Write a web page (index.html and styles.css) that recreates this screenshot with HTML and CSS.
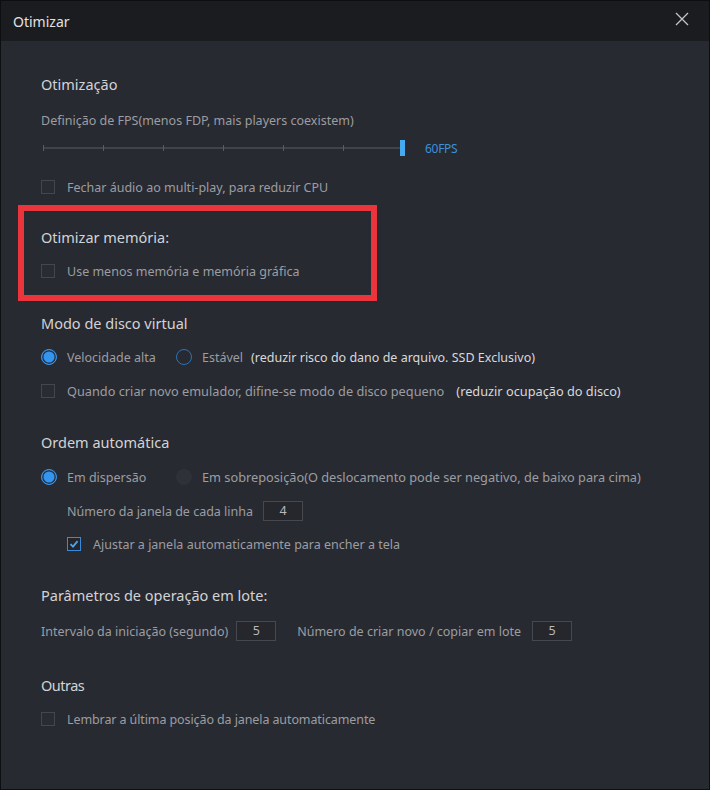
FILE: index.html
```html
<!DOCTYPE html>
<html>
<head>
<meta charset="utf-8">
<link rel="stylesheet" href="styles.css">
</head>
<body>
<div class="win">
  <div class="titlebar">
    <span class="title">Otimizar</span>
    <svg class="close" width="14" height="14" viewBox="0 0 14 14"><path d="M1 1L13 13M13 1L1 13" stroke="#c4c5c8" stroke-width="1.3" fill="none"/></svg>
  </div>
  <div class="content">
    <div class="heading h1">Otimização</div>
    <div class="row desc m16">Definição de FPS(menos FDP, mais players coexistem)</div>
    <div class="slider m10">
      <svg width="368" height="16" viewBox="0 0 368 16">
        <line x1="2" y1="8" x2="361" y2="8" stroke="#5a5c62" stroke-width="1"/>
        <line x1="2.5" y1="5" x2="2.5" y2="11" stroke="#5a5c62"/>
        <line x1="62.5" y1="5" x2="62.5" y2="11" stroke="#5a5c62"/>
        <line x1="122.5" y1="5" x2="122.5" y2="11" stroke="#5a5c62"/>
        <line x1="182.5" y1="5" x2="182.5" y2="11" stroke="#5a5c62"/>
        <line x1="242.5" y1="5" x2="242.5" y2="11" stroke="#5a5c62"/>
        <line x1="302.5" y1="5" x2="302.5" y2="11" stroke="#5a5c62"/>
        <rect x="359" y="0" width="5" height="16" fill="#45aaf0"/>
      </svg>
      <span class="fps">60FPS</span>
    </div>
    <div class="row m21"><span class="cb"></span><span class="lbl">Fechar áudio ao multi-play, para reduzir CPU</span></div>

    <div class="memsec">
      <div class="heading">Otimizar memória:</div>
      <div class="row m14"><span class="cb"></span><span class="lbl">Use menos memória e memória gráfica</span></div>
    </div>

    <div class="heading m32">Modo de disco virtual</div>
    <div class="row m14">
      <span class="radio on"></span><span class="lbl w-vel">Velocidade alta</span>
      <span class="radio"></span><span class="lbl">Estável</span><span class="note">(reduzir risco do dano de arquivo. SSD Exclusivo)</span>
    </div>
    <div class="row m14 wide"><span class="cb"></span><span class="lbl">Quando criar novo emulador, difine-se modo de disco pequeno</span><span class="note n2">(reduzir ocupação do disco)</span></div>

    <div class="heading m31">Ordem automática</div>
    <div class="row m15">
      <span class="radio on"></span><span class="lbl w-vel">Em dispersão</span>
      <span class="radio dis"></span><span class="lbl wide">Em sobreposição(O deslocamento pode ser negativo, de baixo para cima)</span>
    </div>
    <div class="row m14 indent"><span class="lbl">Número da janela de cada linha</span><span class="inp i10">4</span></div>
    <div class="row m13 indent"><span class="cb checked"><svg width="12" height="12" viewBox="0 0 12 12"><path d="M2.5 6.2L5 8.6L9.6 3.2" stroke="#4aa2f0" stroke-width="1.8" fill="none"/></svg></span><span class="lbl">Ajustar a janela automaticamente para encher a tela</span></div>

    <div class="heading m31">Parâmetros de operação em lote:</div>
    <div class="row m16">
      <span class="lbl">Intervalo da iniciação (segundo)</span><span class="inp">5</span>
      <span class="lbl l2">Número de criar novo / copiar em lote</span><span class="inp i11">5</span>
    </div>

    <div class="heading m34 narrowh">Outras</div>
    <div class="row m14"><span class="cb"></span><span class="lbl narrow">Lembrar a última posição da janela automaticamente</span></div>
  </div>
</div>
</body>
</html>
```
FILE: styles.css
```css
*, *::before, *::after { box-sizing: border-box; }
html, body { margin: 0; padding: 0; background: #121316; }
body { font-family: "Noto Sans", "Open Sans", sans-serif; }
.win {
  width: 710px; height: 790px;
  border: 1px solid #0d0e10;
  background: #282a31;
  display: flex; flex-direction: column;
}
.titlebar {
  height: 40px; flex: none;
  background: #1b1c20;
  display: flex; align-items: center; justify-content: space-between;
  padding: 0 20px 0 12px;
}
.title { color: #e2e2e4; font-size: 14px; }
.close { margin-top: -4px; }
.content { padding: 33px 0 0 40px; display: flex; flex-direction: column; }
.heading { height: 20px; line-height: 20px; font-size: 14.5px; color: #d2d3d6; }
.narrowh { letter-spacing: -0.5px; }
.row { height: 20px; display: flex; align-items: center; font-size: 12.5px; color: #9c9da1; white-space: nowrap; }
.desc { font-size: 12.5px; }
.wide { font-size: 12.75px; }
.slider { height: 16px; display: flex; align-items: center; }
.slider svg { display: block; }
.fps { color: #3c90dc; font-size: 12px; margin-left: 16px; letter-spacing: -0.3px; }
.m10 { margin-top: 10px; } .m13 { margin-top: 13px; } .m14 { margin-top: 14px; }
.m15 { margin-top: 15px; } .m16 { margin-top: 16px; } .m21 { margin-top: 21px; }
.m31 { margin-top: 31px; } .m32 { margin-top: 32px; } .m34 { margin-top: 34px; }
.cb {
  width: 14px; height: 14px; flex: none;
  border: 1px solid #44464c; background: #2a2c33;
  margin: 0 12px 0 0;
  display: flex; align-items: center; justify-content: center;
}
.cb.checked { border-color: #3a8adb; background: #23252b; }
.radio {
  width: 16px; height: 16px; flex: none; border-radius: 50%;
  border: 1.5px solid #2d72b8; margin-right: 10px; margin-left: 0;
}
.radio.on { border: 1.5px solid #3d93e6; background: #3595ee; box-shadow: inset 0 0 0 1.5px #23354a; }
.radio.dis { border: none; background: #2f3138; }
.w-vel { width: 109px; }
.note { color: #d8d9dc; margin-left: 8px; }
.note.n2 { margin-left: 12px; }
.indent { padding-left: 26px; }
.inp {
  width: 40px; height: 20px; border: 1px solid #46484e; background: #25272d;
  color: #b8b9bc; text-align: center; line-height: 18px; margin-left: 8px;
  font-size: 12.5px;
}
.inp.i10 { margin-left: 10px; }
.inp.i11 { margin-left: 11px; }
.narrow { letter-spacing: -0.1px; }
.l2 { margin-left: 21px; }
.memsec { position: relative; margin-top: 30px; display: flex; flex-direction: column; }
.memsec::after {
  content: ""; position: absolute;
  left: -23px; top: -22px; width: 359px; height: 96px;
  border: 6px solid #e9353b;
  pointer-events: none;
}
```
